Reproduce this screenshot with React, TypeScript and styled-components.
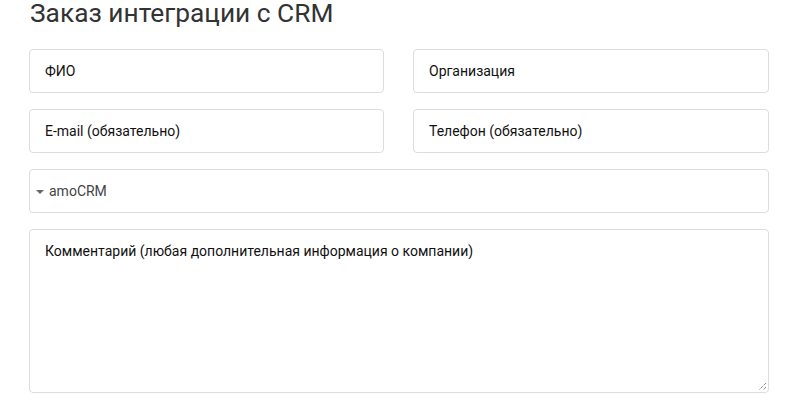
import React from "react";
import styled, { createGlobalStyle } from "styled-components";

const GlobalStyle = createGlobalStyle`
  html, body {
    margin: 0;
    padding: 0;
    background: #fff;
  }
  body {
    font-family: Roboto, "Liberation Sans", Arial, sans-serif;
  }
`;

const Page = styled.div`
  padding: 0 30px 0 29px;
  width: 740px;
`;

const Title = styled.h2`
  margin: 0 0 0 1px;
  font-size: 26.3px;
  line-height: 26px;
  font-weight: 400;
  color: #333;
`;

const Form = styled.form`
  display: flex;
  flex-direction: column;
  gap: 16px;
  margin-top: 23px;
`;

const Row = styled.div`
  display: grid;
  grid-template-columns: 355px 356px;
  column-gap: 29px;
`;

const Field = styled.div`
  box-sizing: border-box;
  height: 44px;
  border: 1px solid #dcdde2;
  border-radius: 4px;
  padding: 0 15px;
  display: flex;
  align-items: center;
  font-size: 14px;
  color: #111;
`;

const SelectBox = styled(Field)`
  padding-left: 6px;
  gap: 5px;
  color: #444;
`;

const Caret = styled.span`
  width: 0;
  height: 0;
  border-left: 4px solid transparent;
  border-right: 4px solid transparent;
  border-top: 4px solid #666;
  margin-top: 1px;
`;

const Comment = styled.div`
  position: relative;
  box-sizing: border-box;
  height: 164px;
  border: 1px solid #dcdde2;
  border-radius: 4px;
  padding: 11px 15px;
  font-size: 14px;
  line-height: 20px;
  color: #111;
`;

const Grip = styled.svg`
  position: absolute;
  right: 1px;
  bottom: 1px;
`;

export default function App() {
  return (
    <>
      <GlobalStyle />
      <Page>
        <Title>Заказ интеграции с CRM</Title>
        <Form>
          <Row>
            <Field>ФИО</Field>
            <Field>Организация</Field>
          </Row>
          <Row>
            <Field>E-mail (обязательно)</Field>
            <Field>Телефон (обязательно)</Field>
          </Row>
          <SelectBox>
            <Caret />
            amoCRM
          </SelectBox>
          <Comment>
            Комментарий (любая дополнительная информация о компании)
            <Grip width="9" height="9" viewBox="0 0 9 9">
              <path d="M8 1 L1 8 M8 5 L5 8" stroke="#555" strokeWidth="1" strokeDasharray="1 1" />
            </Grip>
          </Comment>
        </Form>
      </Page>
    </>
  );
}
